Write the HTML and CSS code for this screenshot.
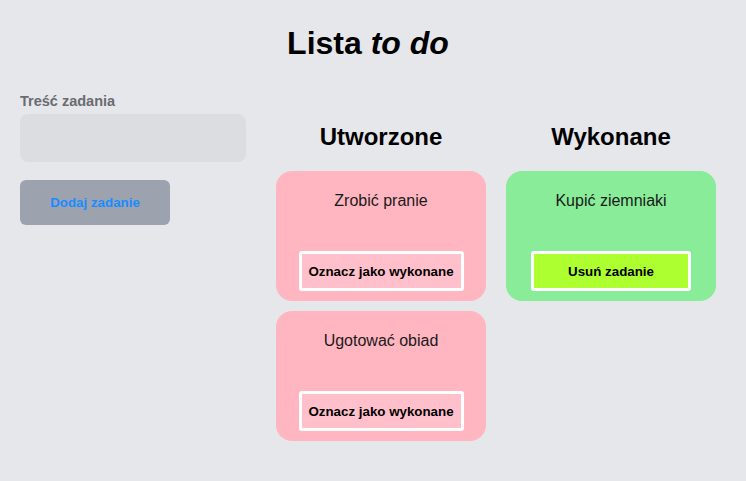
FILE: index.html
```html
<!DOCTYPE html>
<html lang="pl">
<head>
  <meta charset="UTF-8" />
  <meta name="viewport" content="width=device-width, initial-scale=1.0"/>
  <title>Lista to do</title>
  <link rel="stylesheet" href="styles.css">
</head>
<body>

<h1 class="title">Lista <em>to do</em></h1>

<div class="layout">
  <div class="form">
    <label for="taskText">Treść zadania</label>
    <input type="text" id="taskText" />
    <button class="add-btn">Dodaj zadanie</button>
  </div>

  <div class="column">
    <h2>Utworzone</h2>
    <div class="card todo">
      <p>Zrobić pranie</p>
      <button class="card-btn">Oznacz jako wykonane</button>
    </div>
    <div class="card todo">
      <p>Ugotować obiad</p>
      <button class="card-btn">Oznacz jako wykonane</button>
    </div>
  </div>

  <div class="column">
    <h2>Wykonane</h2>
    <div class="card done">
      <p>Kupić ziemniaki</p>
      <button class="card-btn remove">Usuń zadanie</button>
    </div>
  </div>
</div>

</body>
</html>
```

FILE: styles.css
```css
* {
  margin: 0; padding: 0; box-sizing: border-box;
  font-family: 'Liberation Sans', Arial, sans-serif;
}

body {
  background: #e5e7eb;
  color: #000;
  padding: 0 30px 0 20px;
}

h1.title {
  font-size: 32px;
  text-align: center;
  padding-top: 25px;
  line-height: 37px;
}

.layout {
  display: flex;
  gap: 20px;
  margin-top: 31px;
}

.form {
  width: 226px;
  margin-right: 10px;
  display: flex;
  flex-direction: column;
  align-items: flex-start;
}

.form label {
  font-size: 14.5px;
  font-weight: bold;
  color: #6b6b70;
  line-height: 16px;
}

.form input {
  width: 100%;
  height: 48px;
  margin-top: 5px;
  border: none;
  border-radius: 8px;
  background: #dcdde1;
}

.add-btn {
  width: 150px;
  height: 45px;
  margin-top: 18px;
  border: none;
  border-radius: 6px;
  background: #9ca3af;
  color: #1a8cff;
  font-size: 13.33px;
  font-weight: bold;
}

.column {
  width: 210px;
  display: flex;
  flex-direction: column;
  gap: 10px;
}

.column h2 {
  font-size: 24px;
  text-align: center;
  line-height: 28px;
  margin-top: 30px;
  margin-bottom: 10px;
}

.card {
  height: 130px;
  border-radius: 16px;
  display: flex;
  flex-direction: column;
  align-items: center;
  justify-content: space-between;
  padding: 21px 0 10px;
}

.card p {
  font-size: 16px;
  line-height: 18px;
  color: #1a1a1a;
}

.todo { background: #ffb6c1; }
.done { background: #88ec98; }

.card-btn {
  width: 165px;
  height: 40px;
  border: 3px solid #fff;
  border-radius: 3px;
  background: #ffc0cb;
  color: #000;
  font-size: 13.33px;
  font-weight: bold;
}

.card-btn.remove {
  width: 160px;
  background: #adff2f;
}
```
